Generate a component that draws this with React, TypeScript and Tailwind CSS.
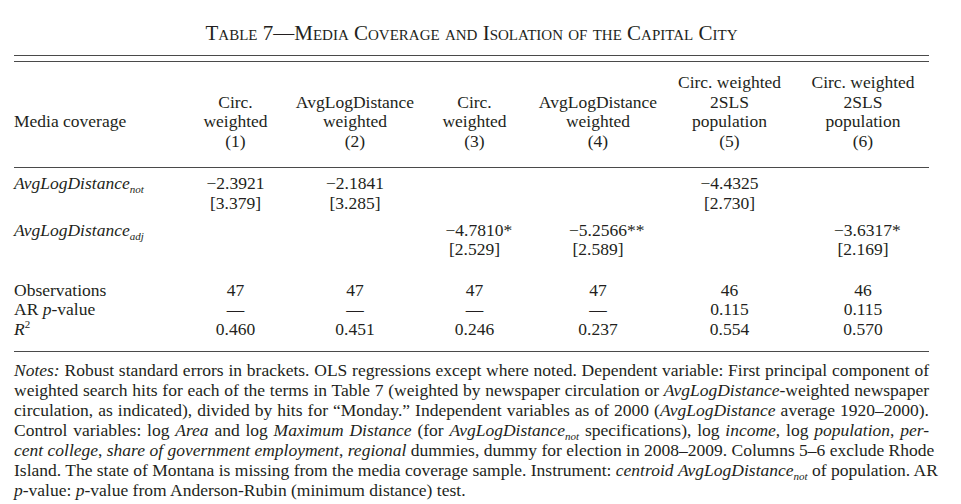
import React from "react";

const cols = "grid grid-cols-[162px_119px_120px_119px_128px_135px_132px]";

const Sub = ({ children }: { children: React.ReactNode }) => (
  <span className="relative top-[4px] text-[11px] leading-none italic">{children}</span>
);

const ALD = ({ sub }: { sub?: string }) => (
  <span className="italic">
    AvgLogDistance
    {sub && <Sub>{sub}</Sub>}
  </span>
);

// number with stars hanging to the right so the figure stays centred
const Est = ({ v, stars, se }: { v: string; stars?: string; se: string }) => (
  <div className="flex flex-col items-center">
    <span className="whitespace-nowrap">
      {v}
      {stars && <span className="inline-block w-0">{stars}</span>}
    </span>
    <span>{se}</span>
  </div>
);

const headers: { lines: string[] }[] = [
  { lines: ["Circ.", "weighted", "(1)"] },
  { lines: ["AvgLogDistance", "weighted", "(2)"] },
  { lines: ["Circ.", "weighted", "(3)"] },
  { lines: ["AvgLogDistance", "weighted", "(4)"] },
  { lines: ["Circ. weighted", "2SLS", "population", "(5)"] },
  { lines: ["Circ. weighted", "2SLS", "population", "(6)"] },
];

const stats = [
  { label: <>Observations</>, vals: ["47", "47", "47", "47", "46", "46"] },
  { label: <>AR <span className="italic">p</span>-value</>, vals: ["—", "—", "—", "—", "0.115", "0.115"] },
  {
    label: (
      <>
        <span className="italic">R</span>
        <span className="relative -top-[7px] text-[11px] leading-none">2</span>
      </>
    ),
    vals: ["0.460", "0.451", "0.246", "0.237", "0.554", "0.570"],
  },
];

const NoteLine = ({ children, last }: { children: React.ReactNode; last?: boolean }) => (
  <div className={last ? "h-[20px] whitespace-nowrap" : "h-[20px] whitespace-nowrap text-justify [text-align-last:justify]"}>
    {children}
  </div>
);

export default function App() {
  return (
    <div className="w-[961px] h-[504px] bg-white font-['Liberation_Serif',serif] text-[#231f20] overflow-hidden">
      <div className="ml-[14px] w-[915px]">
        <h1 className="pt-[22px] text-center text-[21px] leading-[23px] [font-variant-caps:small-caps]">
          Table 7—Media Coverage and Isolation of the Capital City
        </h1>
        <div className="mt-[10px] h-[7px] border-y border-[#4a4a4a]" />

        <div className="text-[17.5px] leading-[19.7px]">
          {/* header */}
          <div className={`${cols} pt-[11px] pb-[15px] border-b border-[#4a4a4a]`}>
            <div className="self-end mb-[19.7px]">Media coverage</div>
            {headers.map((h, i) => (
              <div key={i} className="flex flex-col justify-end items-center text-center">
                {h.lines.map((l, j) => (
                  <span key={j} className="whitespace-nowrap">{l}</span>
                ))}
              </div>
            ))}
          </div>

          {/* estimates */}
          <div className={`${cols} pt-[6px]`}>
            <div><ALD sub="not" /></div>
            <Est v="−2.3921" se="[3.379]" />
            <Est v="−2.1841" se="[3.285]" />
            <div />
            <div />
            <Est v="−4.4325" se="[2.730]" />
            <div />
          </div>
          <div className={`${cols} mt-[7.5px]`}>
            <div><ALD sub="adj" /></div>
            <div />
            <div />
            <Est v="−4.7810" stars="*" se="[2.529]" />
            <Est v="−5.2566" stars="**" se="[2.589]" />
            <div />
            <Est v="−3.6317" stars="*" se="[2.169]" />
          </div>

          {/* stats */}
          <div className="mt-[20.4px] pb-[11px] border-b border-[#4a4a4a]">
            {stats.map((s, i) => (
              <div key={i} className={cols}>
                <div>{s.label}</div>
                {s.vals.map((v, j) => (
                  <div key={j} className="text-center">{v}</div>
                ))}
              </div>
            ))}
          </div>
        </div>

        {/* notes */}
        <div className="pt-[8px] text-[17.5px] leading-[20px]">
          <NoteLine>
            <span className="italic">Notes:</span> Robust standard errors in brackets. OLS regressions except where noted. Dependent variable: First principal component of
          </NoteLine>
          <NoteLine>
            weighted search hits for each of the terms in Table 7 (weighted by newspaper circulation or <ALD />-weighted newspaper
          </NoteLine>
          <NoteLine>
            circulation, as indicated), divided by hits for “Monday.” Independent variables as of 2000 (<ALD /> average 1920–2000).
          </NoteLine>
          <NoteLine>
            Control variables: log <span className="italic">Area</span> and log <span className="italic">Maximum Distance</span> (for <ALD sub="not" /> specifications), log <span className="italic">income</span>, log <span className="italic">population</span>, <span className="italic">per-</span>
          </NoteLine>
          <NoteLine>
            <span className="italic">cent college</span>, <span className="italic">share of government employment</span>, <span className="italic">regional</span> dummies, dummy for election in 2008–2009. Columns 5–6 exclude Rhode
          </NoteLine>
          <NoteLine>
            Island. The state of Montana is missing from the media coverage sample. Instrument: <span className="italic">centroid</span> <ALD sub="not" /> of population. AR
          </NoteLine>
          <NoteLine last>
            <span className="italic">p</span>-value: <span className="italic">p</span>-value from Anderson-Rubin (minimum distance) test.
          </NoteLine>
        </div>
      </div>
    </div>
  );
}
